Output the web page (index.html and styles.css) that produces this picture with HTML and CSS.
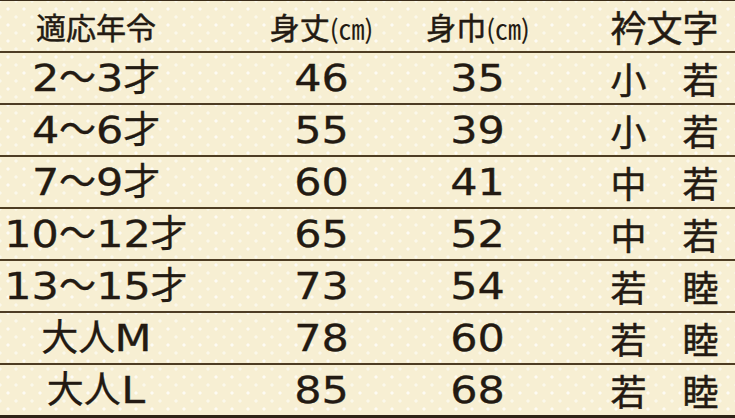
FILE: index.html
```html
<!DOCTYPE html>
<html lang="ja">
<head>
<meta charset="utf-8">
<title>サイズ表</title>
<link rel="stylesheet" href="styles.css">
</head>
<body>
<div class="sheet">
  <div class="row head">
    <div class="cell c1">適応年令</div>
    <div class="cell c2">身丈<span class="unit">(㎝)</span></div>
    <div class="cell c3">身巾<span class="unit">(㎝)</span></div>
    <div class="cell c4">衿文字</div>
  </div>
  <div class="row">
    <div class="cell c1"><span class="n1">2</span>〜<span class="n1">3</span>才</div><div class="cell c2"><span class="n2">46</span></div><div class="cell c3"><span class="n2">35</span></div><div class="cell c4">小　若</div>
  </div>
  <div class="row">
    <div class="cell c1"><span class="n1">4</span>〜<span class="n1">6</span>才</div><div class="cell c2"><span class="n2">55</span></div><div class="cell c3"><span class="n2">39</span></div><div class="cell c4">小　若</div>
  </div>
  <div class="row">
    <div class="cell c1"><span class="n1">7</span>〜<span class="n1">9</span>才</div><div class="cell c2"><span class="n2">60</span></div><div class="cell c3"><span class="n2">41</span></div><div class="cell c4">中　若</div>
  </div>
  <div class="row">
    <div class="cell c1"><span class="n2">10</span>〜<span class="n2">12</span>才</div><div class="cell c2"><span class="n2">65</span></div><div class="cell c3"><span class="n2">52</span></div><div class="cell c4">中　若</div>
  </div>
  <div class="row">
    <div class="cell c1"><span class="n2">13</span>〜<span class="n2">15</span>才</div><div class="cell c2"><span class="n2">73</span></div><div class="cell c3"><span class="n2">54</span></div><div class="cell c4">若　睦</div>
  </div>
  <div class="row">
    <div class="cell c1">大人<span class="n1">M</span></div><div class="cell c2"><span class="n2">78</span></div><div class="cell c3"><span class="n2">60</span></div><div class="cell c4">若　睦</div>
  </div>
  <div class="row last">
    <div class="cell c1">大人<span class="n1">L</span></div><div class="cell c2"><span class="n2">85</span></div><div class="cell c3"><span class="n2">68</span></div><div class="cell c4">若　睦</div>
  </div>
</div>
</body>
</html>
```

FILE: styles.css
```css
html, body {
  margin: 0;
  padding: 0;
}
body {
  width: 735px;
  height: 418px;
  overflow: hidden;
  background-color: #f7efd3;
}
.sheet {
  width: 735px;
  height: 418px;
  background-color: #f7efd3;
  background-image:
    radial-gradient(circle, rgba(255,255,255,0.75) 1.2px, transparent 2px),
    radial-gradient(circle, rgba(255,255,255,0.55) 1.2px, transparent 2px);
  background-size: 16px 16px, 16px 16px;
  background-position: 0 0, 8px 8px;
  border-top: 1px solid #3a2c1a;
  color: #231a12;
  font-family: "DejaVu Sans", "Noto Sans CJK JP", sans-serif;
  font-weight: 400;
  -webkit-text-stroke: 0.3px #231a12;
}
.row {
  display: grid;
  grid-template-columns: 190px 213px 187px 145px;
  align-items: center;
  height: 50px;
  border-bottom: 2px solid #4e3d24;
  font-size: 37px;
  line-height: 1;
}
.row.head {
  font-family: "Noto Sans CJK JP", sans-serif;
  font-size: 30px;
  -webkit-text-stroke: 0.5px #231a12;
}
.row.last {
  border-bottom: 3px solid #2e2316;
}
.cell {
  text-align: center;
  white-space: nowrap;
}
.c1 {
  padding-left: 2px;
}
.c2 {
  padding-left: 50px;
}
.c3 {
  padding-right: 37px;
}
.c4 {
  padding-left: 4px;
  font-family: "Noto Sans CJK JP", sans-serif;
  font-size: 36px;
  -webkit-text-stroke: 0.5px #231a12;
}
.n1, .n2 {
  display: inline-block;
  transform: scaleX(1.16);
}
.n1 {
  margin: 0 0.05em;
}
.n2 {
  margin: 0 0.1em;
}
.unit {
  font-size: 26px;
  -webkit-text-stroke: 0.1px #231a12;
}
```
